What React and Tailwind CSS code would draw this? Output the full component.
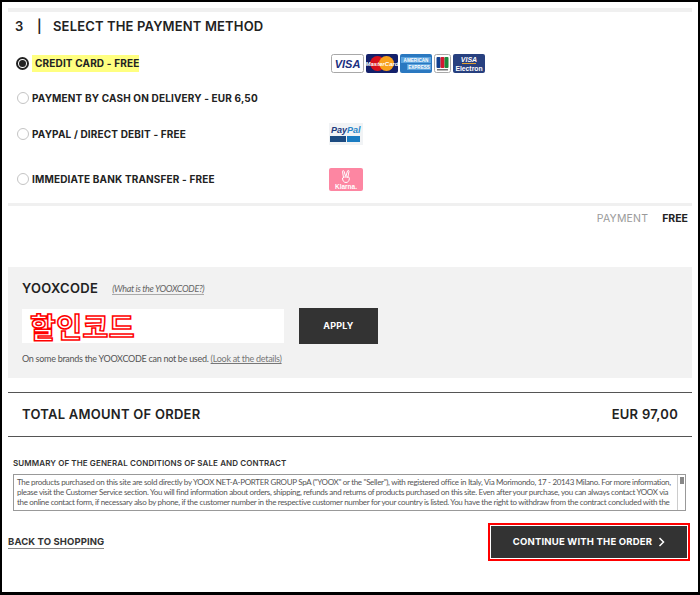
const sans = "font-['Inter','Liberation_Sans',sans-serif]";
const body = "font-['Lato','Noto_Sans',sans-serif]";

function Radio({ checked }) {
  return checked ? (
    <span className="flex h-[13px] w-[13px] shrink-0 items-center justify-center rounded-full border-2 border-[#222] bg-white">
      <span className="h-[7px] w-[7px] rounded-full bg-[#222]" />
    </span>
  ) : (
    <span className="h-[12px] w-[12px] shrink-0 rounded-full border border-[#c4c4c4] bg-white" />
  );
}

function Visa() {
  return (
    <svg width="33" height="19" viewBox="0 0 33 19" className="block">
      <rect x="0.5" y="0.5" width="32" height="18" rx="2" fill="#fff" stroke="#a8a8a8" />
      <text x="16.5" y="14" textAnchor="middle" fontFamily="Liberation Sans" fontWeight="700" fontStyle="italic" fontSize="11" fill="#1a2f7f">VISA</text>
    </svg>
  );
}
function Master() {
  return (
    <svg width="32" height="19" viewBox="0 0 32 19" className="block">
      <rect width="32" height="19" rx="2" fill="#13206a" />
      <circle cx="11.5" cy="9.5" r="7.5" fill="#d8101c" />
      <circle cx="20.5" cy="9.5" r="7.5" fill="#f9a11b" />
      <text x="16" y="11.5" textAnchor="middle" fontFamily="Liberation Sans" fontWeight="700" fontStyle="italic" fontSize="6" fill="#fff">MasterCard</text>
    </svg>
  );
}
function Amex() {
  return (
    <svg width="32" height="19" viewBox="0 0 32 19" className="block">
      <rect width="32" height="19" rx="2" fill="#2a78c0" />
      <rect x="1" y="3" width="30" height="6" fill="#5ba3de" />
      <rect x="7" y="10" width="24" height="6" fill="#5ba3de" />
      <text x="16" y="8" textAnchor="middle" fontFamily="Liberation Sans" fontWeight="700" fontSize="4.6" fill="#fff">AMERICAN</text>
      <text x="19" y="15" textAnchor="middle" fontFamily="Liberation Sans" fontWeight="700" fontSize="4.6" fill="#fff">EXPRESS</text>
    </svg>
  );
}
function Jcb() {
  return (
    <svg width="17" height="19" viewBox="0 0 17 19" className="block">
      <rect x="0.5" y="0.5" width="16" height="18" rx="2" fill="#fff" stroke="#a8a8a8" />
      <rect x="2.5" y="3" width="4" height="11" rx="1" fill="#12408f" />
      <rect x="6.5" y="3" width="4" height="11" rx="1" fill="#d21a32" />
      <rect x="10.5" y="3" width="4" height="11" rx="1" fill="#1d8a3c" />
      <rect x="3" y="15" width="11" height="1.5" fill="#777" />
    </svg>
  );
}
function Electron() {
  return (
    <svg width="32" height="19" viewBox="0 0 32 19" className="block">
      <rect width="32" height="19" rx="2" fill="#27407f" />
      <text x="16" y="8" textAnchor="middle" fontFamily="Liberation Sans" fontWeight="700" fontStyle="italic" fontSize="7" fill="#fff">VISA</text>
      <rect x="9" y="9" width="14" height="1" fill="#e0a030" />
      <text x="16" y="16.5" textAnchor="middle" fontFamily="Liberation Sans" fontWeight="700" fontSize="6.8" fill="#fff">Electron</text>
    </svg>
  );
}
function PayPal() {
  return (
    <svg width="34" height="22" viewBox="0 0 34 22" className="block">
      <rect width="34" height="22" fill="#f1f3f5" />
      <text x="2" y="9.5" fontFamily="Liberation Sans" fontWeight="700" fontStyle="italic" fontSize="9" fill="#1d3a7d">Pay<tspan fill="#2a86c8">Pal</tspan></text>
      <rect x="1" y="13" width="16" height="6" fill="#1c4a80" />
      <rect x="18" y="13" width="13" height="6" fill="#1a7cc2" />
    </svg>
  );
}
function Klarna() {
  return (
    <svg width="34" height="23" viewBox="0 0 34 23" className="block">
      <rect width="34" height="23" rx="2" fill="#fd86a2" />
      <g fill="none" stroke="#fff" strokeWidth="1" strokeLinecap="round" strokeLinejoin="round">
        <path d="M14.5 9.500L13.500 3.500c-.2-1 1.200-1.300 1.500-.3L16.500 8" />
        <path d="M17 8l1.500-5c.3-1 1.700-.6 1.500.4L18.800 9.500" />
        <path d="M13.500 10.500c0-1 1-1.500 2-1.500h3.500c1.200 0 1.500 1 1.300 2-.3 2-1.300 3.500-3.300 3.500s-3.500-1.500-3.500-4z" />
      </g>
      <text x="17" y="20.500" textAnchor="middle" fontFamily="Liberation Sans" fontWeight="700" fontSize="6.500" fill="#fff">Klarna.</text>
    </svg>
  );
}

function Row({ className, children, logos }) {
  return (
    <div className={"flex items-center " + className}>
      <div className="flex w-[315px] shrink-0 items-center">{children}</div>
      {logos}
    </div>
  );
}
const label = "text-[10px] font-bold tracking-[0.16px] text-[#222] whitespace-nowrap";

export default function App() {
  return (
    <div className={"h-[595px] w-[700px] overflow-hidden border-x-2 border-t-2 border-b-[3px] border-black bg-white pt-[6px] " + sans}>
      <div className="mx-[6px] h-[4px] bg-[#f0f0f0]" />

      <div className="mt-[1px] flex h-[28px] items-center pl-[13px] text-[13px] font-semibold tracking-[0.15px] text-[#222]">
        <span className="w-[22px]">3</span>
        <span className="w-[16px]">|</span>
        <span>SELECT THE PAYMENT METHOD</span>
      </div>

      <Row
        className="mt-[10px] h-[24px] pl-[14px]"
        logos={
          <div className="flex items-center gap-[2px]">
            <Visa /><Master /><Amex /><Jcb /><Electron />
          </div>
        }
      >
        <Radio checked />
        <span className={"ml-[3px] bg-[#ffff80] py-[1px] pl-[3px] " + label}>CREDIT CARD - FREE</span>
      </Row>
      <Row className="mt-[11px] h-[24px] pl-[15px]">
        <Radio />
        <span className={"ml-[3px] " + label}>PAYMENT BY CASH ON DELIVERY - EUR 6,50</span>
      </Row>
      <Row className="mt-[12px] h-[24px] pl-[15px]" logos={<div className="-ml-[3px]"><PayPal /></div>}>
        <Radio />
        <span className={"ml-[3px] " + label}>PAYPAL / DIRECT DEBIT - FREE</span>
      </Row>
      <Row className="mt-[21px] h-[24px] pl-[15px]" logos={<div className="-ml-[3px]"><Klarna /></div>}>
        <Radio />
        <span className={"ml-[3px] " + label}>IMMEDIATE BANK TRANSFER - FREE</span>
      </Row>

      <div className="mx-[6px] mt-[12px] h-[3px] bg-[#f0f0f0]" />

      <div className="flex h-[26px] items-center justify-end pr-[10px] text-[10.5px]">
        <span className="font-normal tracking-[0.2px] text-[#9a9a9a]">PAYMENT</span>
        <span className="ml-[14px] font-bold text-[#222]">FREE</span>
      </div>

      <div className="mx-[6px] mt-[35px] h-[111px] bg-[#f2f2f2] px-[14px] pt-[13px]">
        <div className="flex h-[17px] items-center">
          <span className="text-[13px] font-semibold tracking-[0.3px] text-[#222]">YOOXCODE</span>
          <span className={"ml-[14px] border-b border-[#aaa] text-[9px] italic leading-[11px] tracking-[-0.35px] text-[#666] " + body}>(What is the YOOXCODE?)</span>
        </div>
        <div className="mt-[11px] flex items-center">
          <div className="flex h-[34px] w-[262px] items-center bg-white pl-[8px] font-['Noto_Sans_CJK_KR',sans-serif] text-[28px] font-bold leading-none tracking-[0.5px] text-white [-webkit-text-stroke:1.5px_#ff0000]">
            할인코드
          </div>
          <div className="ml-[15px] flex h-[36px] w-[79px] items-center justify-center bg-[#333] text-[9px] font-bold tracking-[0.2px] text-white">
            APPLY
          </div>
        </div>
        <div className={"mt-[9px] text-[9px] leading-[12px] tracking-[-0.28px] text-[#555] " + body}>
          On some brands the YOOXCODE can not be used. <span className="text-[#777] underline">(Look at the details)</span>
        </div>
      </div>

      <div className="mx-[6px] mt-[14px] flex h-[45px] items-center justify-between border-y border-[#555] px-[14px] text-[13px] font-semibold tracking-[0.25px] text-[#222]">
        <span>TOTAL AMOUNT OF ORDER</span>
        <span>EUR 97,00</span>
      </div>

      <div className="mt-[21px] pl-[11px] text-[8px] font-semibold leading-[11px] tracking-[0.1px] text-[#333]">
        SUMMARY OF THE GENERAL CONDITIONS OF SALE AND CONTRACT
      </div>

      <div className={"relative ml-[11px] mt-[5px] h-[37px] w-[673px] border border-[#999] pl-[3px] pt-[2px] text-[8px] leading-[10px] tracking-[-0.32px] text-[#555] " + body}>
        <div className="whitespace-nowrap">The products purchased on this site are sold directly by YOOX NET-A-PORTER GROUP SpA ("YOOX" or the "Seller"), with registered office in Italy, Via Morimondo, 17 - 20143 Milano. For more information,</div>
        <div className="whitespace-nowrap">please visit the Customer Service section. You will find information about orders, shipping, refunds and returns of products purchased on this site. Even after your purchase, you can always contact YOOX via</div>
        <div className="whitespace-nowrap">the online contact form, if necessary also by phone, if the customer number in the respective customer number for your country is listed. You have the right to withdraw from the contract concluded with the</div>
        <div className="absolute inset-y-0 right-0 w-[8px] border-l border-[#ccc] bg-white">
          <div className="mx-auto mt-[2px] h-[7px] w-[4px] bg-[#888]" />
        </div>
      </div>

      <div className="mt-[12px] flex items-center justify-between pl-[6px] pr-[8px]">
        <span className="border-b border-[#888] text-[9.5px] font-bold leading-[12px] tracking-[0.1px] text-[#333]">BACK TO SHOPPING</span>
        <div className="flex h-[38px] w-[202px] items-center justify-center border-2 border-[#f00] bg-white p-[1px]">
          <div className="flex h-full w-full items-center justify-center gap-[6px] bg-[#333] text-[9.5px] font-bold tracking-[0.2px] text-white">
            <span>CONTINUE WITH THE ORDER</span>
            <svg width="7" height="10" viewBox="0 0 7 10"><path d="M1.500 1l4 4-4 4" fill="none" stroke="#fff" strokeWidth="1.500" /></svg>
          </div>
        </div>
      </div>
    </div>
  );
}
